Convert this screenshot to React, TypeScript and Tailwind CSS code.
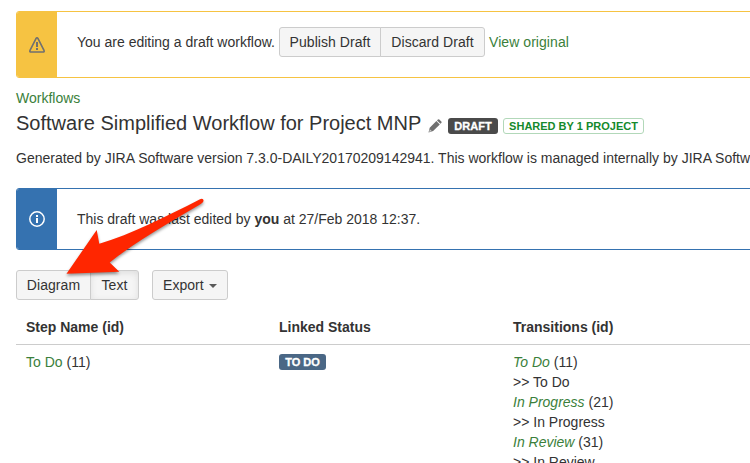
import React from "react";

const buttonBase =
  "flex h-[30px] items-center border border-[#ccc] bg-[#f5f5f5] text-[14px] leading-5 tracking-[0.05px] text-[#333]";
const link = "text-[#3b7f3b]";

function WarningIcon() {
  return (
    <svg width="16" height="16" viewBox="0 0 16 16" fill="none" stroke="#707070">
      <path
        d="M7.1 1.4a1 1 0 0 1 1.8 0l6.1 12a1 1 0 0 1-.9 1.6H1.9a1 1 0 0 1-.9-1.6z"
        strokeWidth="1.6"
        strokeLinejoin="round"
      />
      <path d="M8 5v5M8 11v2" strokeWidth="2" />
    </svg>
  );
}

function InfoIcon() {
  return (
    <svg width="16" height="16" viewBox="0 0 16 16" fill="none" stroke="#fff">
      <circle cx="8" cy="8" r="7.2" strokeWidth="1.5" />
      <path d="M8 4v2M8 7v5" strokeWidth="2" />
    </svg>
  );
}

function PencilIcon() {
  return (
    <svg width="14" height="14" viewBox="0 0 14 14" fill="#707070">
      <path d="M1.7 8.7 8.4 2 11.8 5.4 5.1 12.1.5 13.6zM9 1.4l.9-.9a1 1 0 0 1 1.4 0l2 2a1 1 0 0 1 0 1.4l-.9.9z" />
      <path d="M1.8 10.2 3.7 12 1.1 12.9z" fill="#ccc" />
    </svg>
  );
}

function Arrow() {
  return (
    <svg
      className="pointer-events-none absolute left-0 top-0 drop-shadow-[0_2px_1.5px_rgba(0,0,0,0.4)]"
      width="240"
      height="300"
      viewBox="0 0 240 300"
    >
      <path
        d="M66.5 273.8 96.7 230 99.3 243.8C132 234 165 217 200 199.2Q203.4 197.8 203.6 200.8C203.2 202.5 202 203 200 204.4C165 225 135 242 109.7 262.5L119.3 271.7Z"
        fill="#ff2600"
      />
    </svg>
  );
}

const transitions = [
  { name: "To Do", id: 11 },
  { name: "In Progress", id: 21 },
  { name: "In Review", id: 31 },
];

export default function App() {
  return (
    <main className="relative h-[463px] w-[750px] overflow-hidden bg-white pl-4 pt-[11px] font-['Liberation_Sans',Arial,sans-serif] text-[14px] leading-5 text-[#333]">
      <section className="flex h-[67px] w-[760px] overflow-hidden rounded-[3px] border border-[#f6c342]">
        <div className="flex w-10 shrink-0 items-center justify-center bg-[#f6c342]">
          <WarningIcon />
        </div>
        <div className="flex items-start pl-5 pt-[15px]">
          <span className="mt-[5px] w-[202px] whitespace-nowrap">You are editing a draft workflow.</span>
          <button className={`${buttonBase} w-[102px] justify-center rounded-l-[3px]`}>Publish Draft</button>
          <button className={`${buttonBase} -ml-px w-[105px] justify-center rounded-r-[3px]`}>Discard Draft</button>
          <a className={`${link} ml-1 mt-[5px] tracking-[0.06px]`}>View original</a>
        </div>
      </section>

      <a className={`${link} mt-[10px] block`}>Workflows</a>
      <header className="mt-px flex h-[30px] items-start">
        <h1 className="w-[412px] whitespace-nowrap text-[20px] leading-[28px]">
          Software Simplified Workflow for Project MNP
        </h1>
        <div className="mt-[10px] w-5"><PencilIcon /></div>
        <span className="mt-[9px] flex h-4 w-[50px] items-center justify-center rounded-[3px] bg-[#4a4a4a] text-[11px] font-bold leading-4 text-white [-webkit-text-stroke:0.3px_#fff]">
          DRAFT
        </span>
        <span className="ml-[5px] mt-[9px] flex h-4 w-[141px] items-center justify-center whitespace-nowrap rounded-[3px] border border-[#b2d8b9] text-[11px] font-bold leading-4 text-[#14892c]">
          SHARED BY 1 PROJECT
        </span>
      </header>
      <p className="mt-[9px] whitespace-nowrap">
        Generated by JIRA Software version 7.3.0-DAILY20170209142941. This workflow is managed internally by JIRA Software.
      </p>

      <section className="mt-5 flex h-[62px] w-[760px] overflow-hidden rounded-[3px] border border-[#3572b0]">
        <div className="flex w-10 shrink-0 items-center justify-center bg-[#3572b0]">
          <InfoIcon />
        </div>
        <p className="pl-5 pt-5">
          This draft was last edited by <strong>you</strong> at 27/Feb 2018 12:37.
        </p>
      </section>

      <div className="mt-5 flex">
        <button className={`${buttonBase} w-[75px] justify-center rounded-l-[3px]`}>Diagram</button>
        <button className={`${buttonBase} -ml-px w-[49px] justify-center rounded-r-[3px] shadow-[inset_0_2px_6px_#ddd]`}>
          Text
        </button>
        <button className={`${buttonBase} ml-[13px] w-[76px] rounded-[3px] pl-[10px]`}>
          Export
          <svg className="ml-[5px] mt-px" width="8" height="4" viewBox="0 0 8 4" fill="#595959">
            <path d="M0 0h8L4 4z" />
          </svg>
        </button>
      </div>

      <table className="mt-[10px] w-[760px] table-fixed border-separate border-spacing-0 text-left">
        <colgroup>
          <col className="w-[253px]" />
          <col className="w-[234px]" />
          <col />
        </colgroup>
        <thead>
          <tr>
            <th className="border-b border-[#ccc] px-[10px] pb-[7px] pt-[7px]">Step Name (id)</th>
            <th className="border-b border-[#ccc] px-[10px] pb-[7px] pt-[7px]">Linked Status</th>
            <th className="border-b border-[#ccc] px-[10px] pb-[7px] pt-[7px]">Transitions (id)</th>
          </tr>
        </thead>
        <tbody>
          <tr className="align-top">
            <td className="px-[10px] pt-[7px]"><a className={link}>To Do</a> (11)</td>
            <td className="px-[10px] pt-[9px]">
              <span className="flex h-4 w-[47px] items-center justify-center rounded-[3px] bg-[#4a6785] text-[11px] font-bold leading-4 text-white [-webkit-text-stroke:0.3px_#fff]">
                TO DO
              </span>
            </td>
            <td className="px-[10px] pt-[7px]">
              {transitions.map((t) => (
                <div key={t.id}>
                  <div><a className={`${link} italic`}>{t.name}</a> ({t.id})</div>
                  <div>&gt;&gt; {t.name}</div>
                </div>
              ))}
            </td>
          </tr>
        </tbody>
      </table>
      <Arrow />
    </main>
  );
}
